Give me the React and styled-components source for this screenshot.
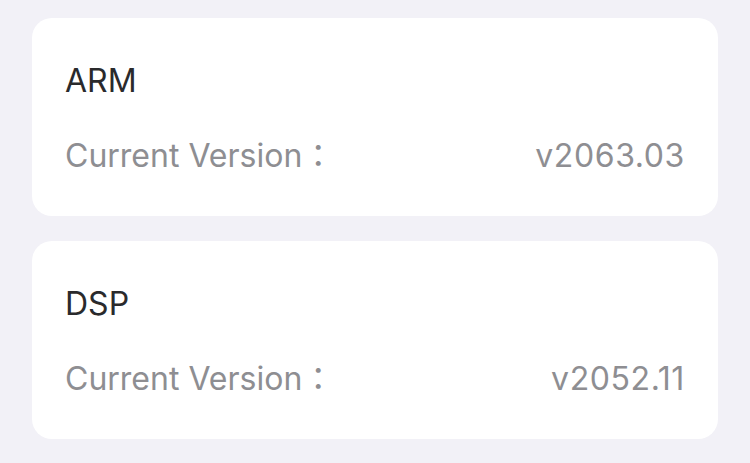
import styled, { createGlobalStyle } from 'styled-components';

const GlobalStyle = createGlobalStyle`
  html, body {
    margin: 0;
    padding: 0;
    background: #f2f1f7;
  }
  body {
    font-family: Inter, "Noto Sans CJK TC", sans-serif;
  }
`;

const Page = styled.div`
  display: flex;
  flex-direction: column;
  gap: 25px;
  padding: 18px 32px;
  min-height: 463px;
  box-sizing: border-box;
`;

const Card = styled.div`
  display: flex;
  flex-direction: column;
  gap: 35px;
  height: 198px;
  box-sizing: border-box;
  padding: 43px 33px 0 33px;
  background: #ffffff;
  border-radius: 20px;
`;

const Title = styled.div`
  font-size: 32px;
  line-height: 40px;
  color: #2a2a2c;
`;

const Row = styled.div`
  display: flex;
  justify-content: space-between;
  align-items: baseline;
  font-size: 32px;
  line-height: 40px;
  color: #8e8e92;
`;

const Value = styled.span`
  letter-spacing: 0.6px;
`;

const firmware = [
  { name: 'ARM', version: 'v2063.03' },
  { name: 'DSP', version: 'v2052.11' },
];

export default function App() {
  return (
    <>
      <GlobalStyle />
      <Page>
        {firmware.map((item) => (
          <Card key={item.name}>
            <Title>{item.name}</Title>
            <Row>
              <span>Current Version：</span>
              <Value>{item.version}</Value>
            </Row>
          </Card>
        ))}
      </Page>
    </>
  );
}
